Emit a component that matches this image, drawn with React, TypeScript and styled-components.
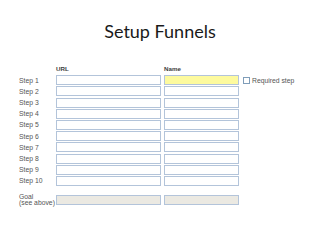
import React from 'react';
import styled, { createGlobalStyle } from 'styled-components';

const GlobalStyle = createGlobalStyle`
  html, body {
    margin: 0;
    padding: 0;
    background: #fff;
  }
  body {
    width: 320px;
    height: 240px;
    overflow: hidden;
  }
`;

const Slide = styled.div`
  width: 320px;
  height: 240px;
  display: flex;
  flex-direction: column;
  font-family: 'Liberation Sans', Arial, sans-serif;
`;

const Title = styled.h1`
  margin: 0;
  padding-top: 19px;
  height: 44px;
  box-sizing: border-box;
  text-align: center;
  font-family: Lato, 'Open Sans', sans-serif;
  font-weight: 400;
  font-size: 18px;
  line-height: 24px;
  color: #1a1a1a;
`;

const Form = styled.div`
  display: grid;
  grid-template-columns: 34px 105px 75px auto;
  grid-template-rows: repeat(11, 10px) 7px 10px;
  column-gap: 3px;
  row-gap: 1.2px;
  padding-left: 19px;
  padding-top: 20px;
`;

const Header = styled.div`
  font-size: 6.2px;
  font-weight: 700;
  color: #3c3c3c;
  line-height: 6px;
  align-self: end;
  padding-bottom: 2px;
`;

const Label = styled.div`
  font-size: 6.8px;
  line-height: 7px;
  color: #555;
  align-self: center;
  white-space: nowrap;
`;

const Field = styled.div<{ $tone?: 'yellow' | 'disabled' }>`
  box-sizing: border-box;
  height: 10px;
  border: 1px solid #b3c4da;
  background: ${({ $tone }) =>
    $tone === 'yellow' ? '#fdfa9e' : $tone === 'disabled' ? '#ebe9e2' : '#fff'};
`;

const Required = styled.label`
  display: flex;
  align-items: center;
  gap: 2px;
  margin-left: 1px;
  font-size: 6.8px;
  color: #555;
  white-space: nowrap;
`;

const Box = styled.span`
  display: inline-block;
  width: 7px;
  height: 7px;
  box-sizing: border-box;
  border: 1px solid #7f9db9;
  background: #fff;
`;

const Spacer = styled.div`
  grid-column: 1 / -1;
`;

const GoalLabel = styled(Label)`
  line-height: 6.5px;
  align-self: center;
`;

const Empty = styled.div``;

export default function App() {
  const steps = Array.from({ length: 10 }, (_, i) => i + 1);
  return (
    <Slide>
      <GlobalStyle />
      <Title>Setup Funnels</Title>
      <Form>
        <Empty />
        <Header>URL</Header>
        <Header>Name</Header>
        <Empty />
        {steps.map((n) => (
          <React.Fragment key={n}>
            <Label>Step {n}</Label>
            <Field />
            <Field $tone={n === 1 ? 'yellow' : undefined} />
            {n === 1 ? (
              <Required>
                <Box />
                Required step
              </Required>
            ) : (
              <Empty />
            )}
          </React.Fragment>
        ))}
        <Spacer />
        <GoalLabel>
          Goal
          <br />
          (see above)
        </GoalLabel>
        <Field $tone="disabled" />
        <Field $tone="disabled" />
        <Empty />
      </Form>
    </Slide>
  );
}
